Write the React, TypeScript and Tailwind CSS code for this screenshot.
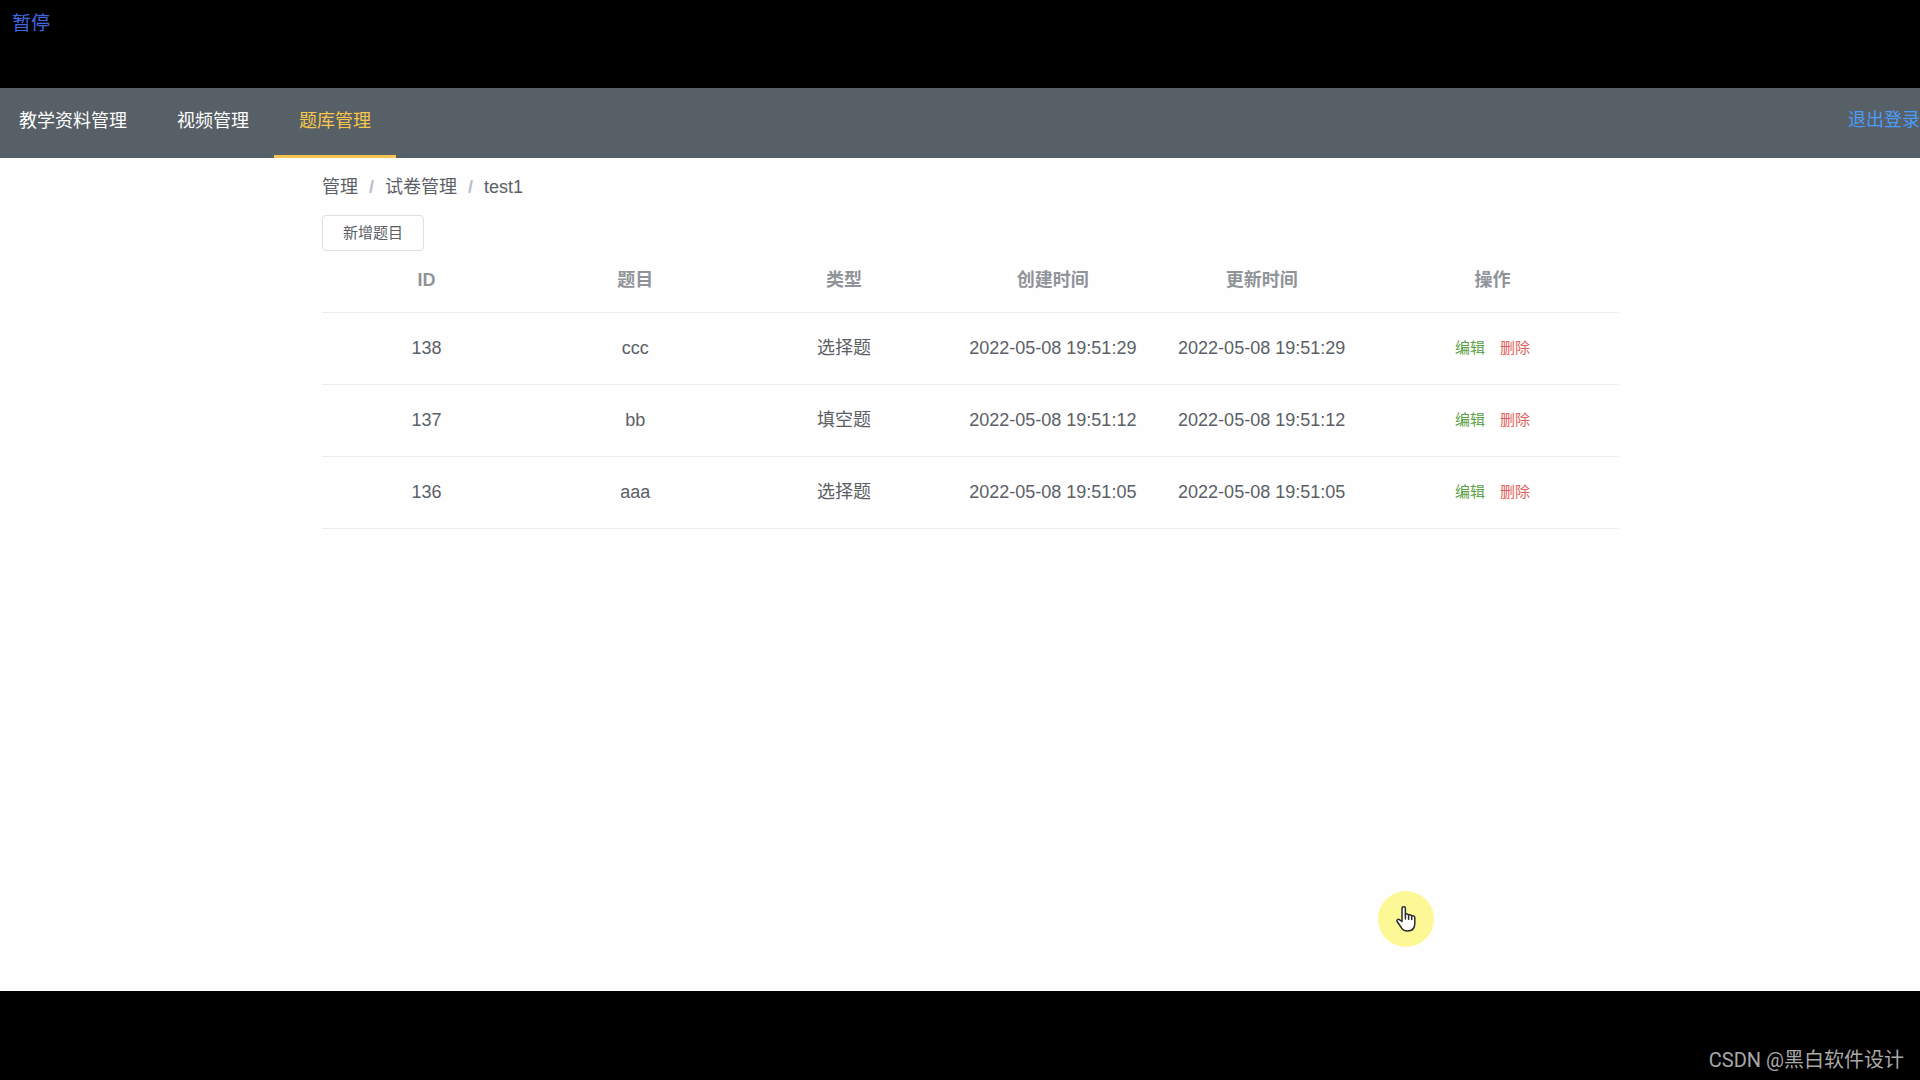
import { useState } from "react";

interface Question {
    id: number;
    title: string;
    type: string;
    createdAt: string;
    updatedAt: string;
}

const menus = ["教学资料管理", "视频管理", "题库管理"];

const columns = ["ID", "题目", "类型", "创建时间", "更新时间", "操作"];

const questions: Question[] = [
    { id: 138, title: "ccc", type: "选择题", createdAt: "2022-05-08 19:51:29", updatedAt: "2022-05-08 19:51:29" },
    { id: 137, title: "bb", type: "填空题", createdAt: "2022-05-08 19:51:12", updatedAt: "2022-05-08 19:51:12" },
    { id: 136, title: "aaa", type: "选择题", createdAt: "2022-05-08 19:51:05", updatedAt: "2022-05-08 19:51:05" },
];

function NavBar() {
    const [active, setActive] = useState("题库管理");

    return (
        <nav className="flex h-[70px] items-stretch justify-between overflow-hidden bg-[#586067] text-lg">
            <div className="-ml-1.5 flex">
                {menus.map((menu) => (
                    <a
                        key={menu}
                        href="#"
                        onClick={() => setActive(menu)}
                        className={
                            active === menu
                                ? "flex items-center border-b-3 border-[#f5c451] px-[25px] pb-0.5 text-[#f9c74b]"
                                : "flex items-center border-b-3 border-transparent px-[25px] pb-0.5 text-white"
                        }
                    >
                        {menu}
                    </a>
                ))}
            </div>
            <a href="#" className="flex items-center pb-1.5 text-[#4a9bfa]">
                退出登录
            </a>
        </nav>
    );
}

function Breadcrumb() {
    return (
        <ol className="flex h-[57px] items-center text-lg text-[#5b6066]">
            <li>
                <a href="#">管理</a>
            </li>
            <li className="px-[11px] font-bold text-[#b8bec8]">/</li>
            <li>
                <a href="#">试卷管理</a>
            </li>
            <li className="px-[11px] font-bold text-[#b8bec8]">/</li>
            <li>test1</li>
        </ol>
    );
}

function QuestionTable() {
    return (
        <table className="w-full table-fixed border-collapse text-center text-lg text-[#5b6066]">
            <thead>
                <tr className="h-[61px] border-b border-[#ebeef0] text-[#909399]">
                    {columns.map((column) => (
                        <th key={column} className={column === "操作" ? "pb-0.5" : "w-[16.1%] pb-0.5"}>
                            {column}
                        </th>
                    ))}
                </tr>
            </thead>
            <tbody>
                {questions.map((q) => (
                    <tr key={q.id} className="h-[72px] border-b border-[#ebeef0]">
                        <td>{q.id}</td>
                        <td>{q.title}</td>
                        <td>{q.type}</td>
                        <td>{q.createdAt}</td>
                        <td>{q.updatedAt}</td>
                        <td>
                            <div className="flex justify-center gap-[15px] text-[15px]">
                                <button className="text-[#5a9f45]">编辑</button>
                                <button className="text-[#e25f5a]">删除</button>
                            </div>
                        </td>
                    </tr>
                ))}
            </tbody>
        </table>
    );
}

// Hand pointer with the recorder's yellow highlight
function Pointer() {
    return (
        <div className="pointer-events-none absolute right-[486px] bottom-11 flex size-14 items-center justify-center rounded-full bg-[#fdf896]">
            <svg width="20" height="26" viewBox="0 0 20 26" aria-hidden="true">
                <path
                    d="M6 15.500V2.500a1.700 1.700 0 0 1 3.400 0v6c.5-1 3-.8 3.200.7.6-.9 2.900-.6 3.100.9.700-.8 3.100-.4 3.100 1.500v6c0 4.500-2.600 7.400-7.200 7.400-3.500 0-5.200-1.500-6.500-3.700L1.100 15.500c-.7-1.300.9-2.700 2.200-1.900z"
                    fill="#fff"
                    stroke="#2b2b2b"
                    strokeWidth="1.500"
                    strokeLinejoin="round"
                />
                <path d="M9.400 8.500v4.500M12.600 9.200v4M15.700 10.200v3.200" fill="none" stroke="#2b2b2b" strokeWidth="1.500" strokeLinecap="round" />
            </svg>
        </div>
    );
}

export default function App() {
    return (
        <div className="flex min-h-screen flex-col bg-black font-['Liberation_Sans','Noto_Sans_CJK_SC',sans-serif]">
            <header className="h-[88px] px-3 py-2.5">
                <button className="text-[19px] text-[#4169e1]">暂停</button>
            </header>

            <NavBar />

            <main className="relative flex-1 bg-[#fefefe] pr-[301px] pl-[322px]">
                <Breadcrumb />
                <button className="block h-9 rounded border border-[#dcdfe6] px-5 text-[15px] text-[#5b6066]">
                    新增题目
                </button>
                <QuestionTable />
                <Pointer />
            </main>

            <footer className="flex h-[89px] items-end justify-end px-4 pb-1.5 font-[Roboto,'Noto_Sans_CJK_SC',sans-serif] text-xl text-[#a8a8a8]">
                CSDN @黑白软件设计
            </footer>
        </div>
    );
}
